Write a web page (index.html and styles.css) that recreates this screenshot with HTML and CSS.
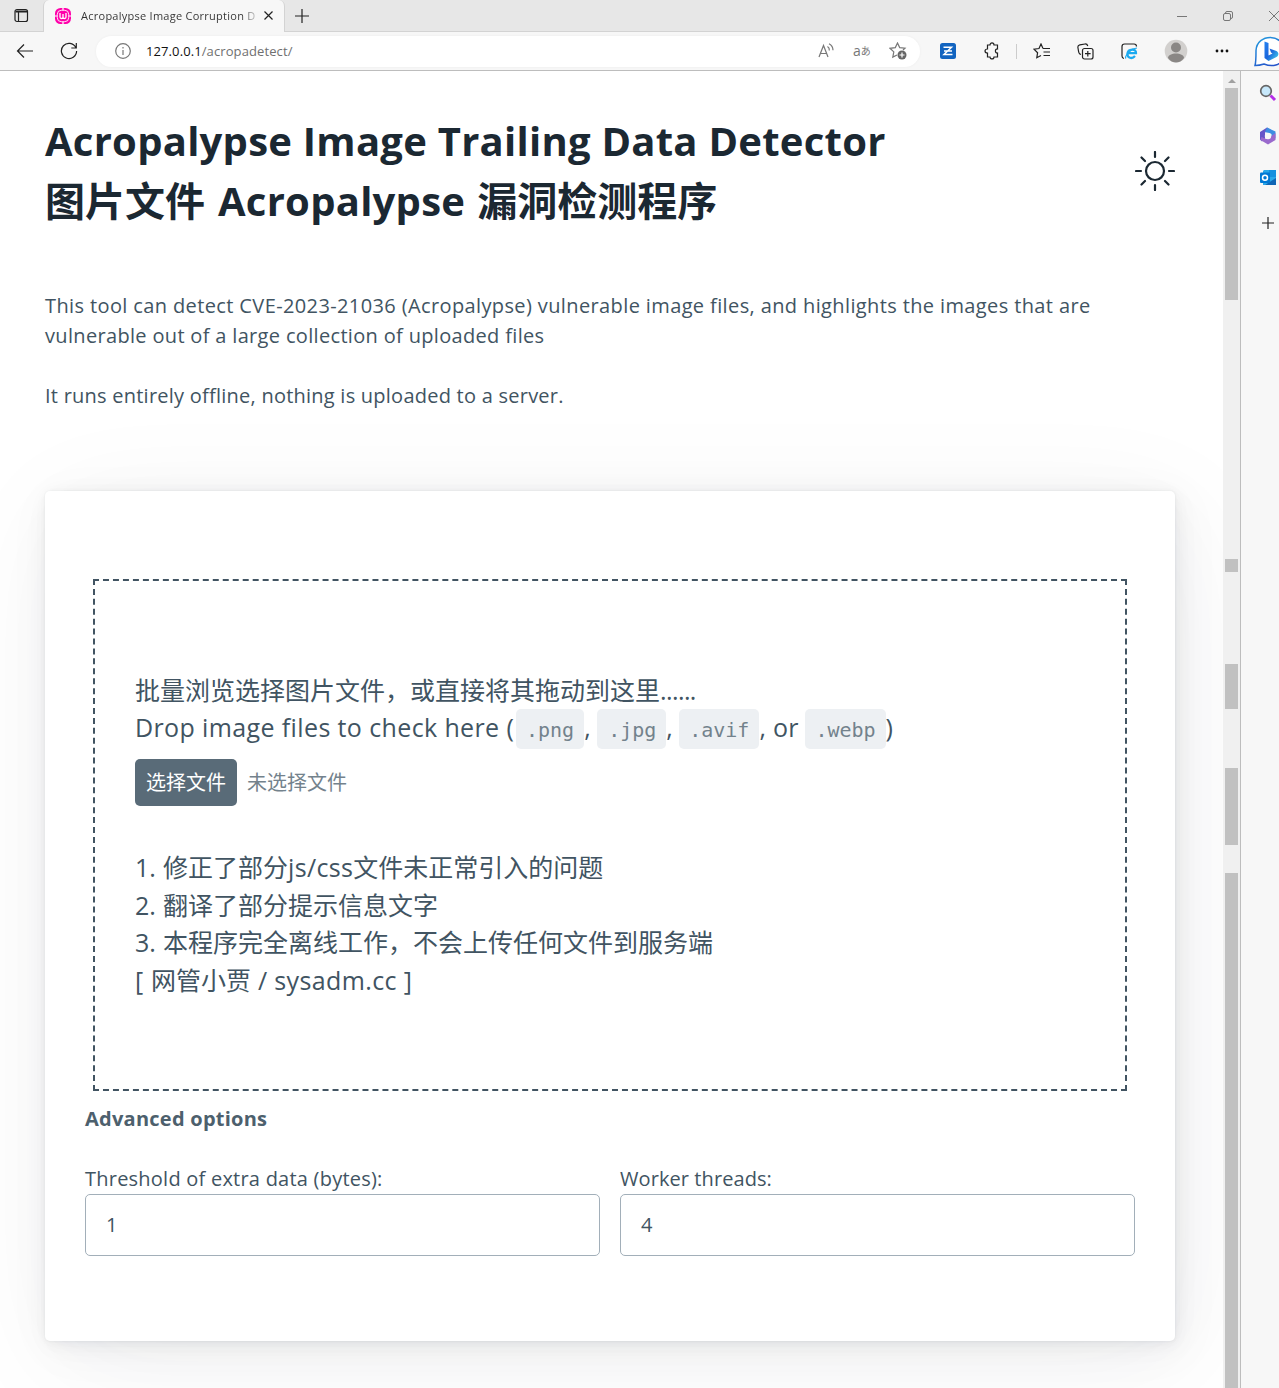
FILE: index.html
```
<!DOCTYPE html>
<html lang="zh-CN">
<head>
<meta charset="utf-8">
<title>Acropalypse Image Corruption Detector</title>
<link rel="stylesheet" href="styles.css">
</head>
<body>
<div class="browser">
  <header class="tabs">
    <div class="tab-menu"><svg width="15" height="15" viewBox="0 0 15 15"><rect x="1" y="1.500" width="12.500" height="12" rx="2"/><path d="M1.500 4h12M4.500 4v9M1.500 3h12"/></svg></div>
    <div class="tab">
      <svg class="favicon" width="16" height="16" viewBox="0 0 16 16"><rect width="16" height="16" rx="5.500" fill="#f0a"/><path d="M8 0v2M8 14v2M0 8h2M14 8h2" stroke="#fff"/><rect x="2.300" y="2.300" width="11.400" height="11.400" rx="4" fill="none" stroke="#fff" stroke-width=".9"/><path d="M5 5v4a1.500 1.500 0 0 0 3 0V6v3a1.500 1.500 0 0 0 3 0V5" fill="none" stroke="#fff" stroke-width="1.300"/></svg>
      <span class="tab-title">Acropalypse Image Corruption D</span>
      <svg width="9" height="9" viewBox="0 0 9 9"><path d="M.5.5l8 8M8.500.5l-8 8"/></svg>
    </div>
    <svg class="new-tab" width="14" height="14" viewBox="0 0 14 14"><path d="M7 0v14M0 7h14"/></svg>
    <div class="window-buttons">
      <svg width="10" height="10" viewBox="0 0 10 10"><path d="M0 5.500h10"/></svg>
      <svg width="10" height="10" viewBox="0 0 10 10"><rect x=".5" y="2.500" width="7" height="7" rx="1.500"/><path d="M2.500 2.500V2A1.500 1.500 0 0 1 4 .5h4A1.500 1.500 0 0 1 9.500 2v4A1.500 1.500 0 0 1 8 7.500h-.5"/></svg>
      <svg width="10" height="10" viewBox="0 0 10 10"><path d="M0 0l10 10M10 0L0 10"/></svg>
    </div>
  </header>
  <nav class="toolbar">
    <svg class="back" width="18" height="16" viewBox="0 0 18 16"><path d="M17 8H1.500M8 1.500L1.500 8 8 14.500"/></svg>
    <svg class="reload" width="18" height="18" viewBox="0 0 18 18"><path d="M15.800 5.500A7.600 7.600 0 1 0 16.600 9M16.300 1v5h-5"/></svg>
    <div class="address">
      <svg width="16" height="16" viewBox="0 0 16 16"><circle cx="8" cy="8" r="7.300"/><path d="M8 7v5M8 4v1.500"/></svg>
      <span class="url"><b>127.0.0.1</b>/acropadetect/</span>
      <div class="address-tools">
        <svg width="17" height="16" viewBox="0 0 17 16"><path d="M1 14L5.500 2.500 10 14M2.500 10.500h6M9.500 3.500a4 4 0 0 1 1.800 4M11 .8a7.500 7.500 0 0 1 4 6.500"/></svg>
        <span class="translate"><i>a</i>あ</span>
        <svg width="18" height="18" viewBox="0 0 18 18"><path d="M14 8l2-1.800-5.300-.6L8.500 1 6.300 5.600 1 6.300l3.800 3.600-1 5.200L8 13"/><circle cx="13" cy="13" r="4.500" fill="#666" stroke="none"/><path d="M10.500 13h5M13 10.500v5" stroke="#fff"/></svg>
      </div>
    </div>
    <div class="extensions">
      <svg width="16" height="16" viewBox="0 0 16 16"><rect width="16" height="16" rx="2.500" fill="#1264c0" stroke="none"/><path d="M3.500 4.300h8L4 11.500h8.500M4 8h8" stroke="#fff" stroke-width="1.500"/></svg>
      <svg width="16" height="18" viewBox="0 0 16 18"><path d="M3.500 3H6c0-2.800 4-2.800 4 0h3.500v4c-2.800-.4-2.800 4.400 0 4v4H10c0 2.600-4 2.600-4 0H3.500v-4c-3.300 0-3.300-4 0-4z"/></svg>
      <span class="divider"></span>
      <svg width="18" height="16" viewBox="0 0 18 16"><path d="M10 5.500L8 1 6 5.500l-5 .7 3.600 3.500-.8 5L8 12.500M10 5.500h7M10.500 9H17M10.500 12.500H17"/></svg>
      <svg width="17" height="17" viewBox="0 0 17 17"><path d="M4 11.500c-1.600-.2-2-1-2.300-2.300L.9 4.500C.7 3 1.400 2.200 2.800 1.900L8 1c1.500-.2 2.300.4 2.800 2"/><rect x="5.500" y="5.500" width="10.500" height="10.500" rx="2"/><path d="M8 10.700h5.600M10.800 8v5.600"/></svg>
      <svg width="17" height="17" viewBox="0 0 17 17"><path d="M3 15.500C1.600 15.300 1 14.500 1 13V3.500Q1 1 3.500 1H13q2.500 0 2.500 2.500"/><path d="M14 13c-3 3.500-8 2-7.500-2.500.5-5 9-5.500 8.500-.3H7.500" stroke="#1baaf0" stroke-width="2.300"/><path d="M5 15.500c-2-2 5-10 11-10.500" stroke="#1baaf0"/></svg>
      <svg class="avatar" width="24" height="24" viewBox="0 0 24 24"><circle cx="12" cy="12" r="11.300" fill="#d2d0ce" stroke="none"/><circle cx="12" cy="8.500" r="5" fill="#8a8785" stroke="none"/><path d="M4 19c0-6 16-6 16 0-4 6-12 6-16 0" fill="#8a8785" stroke="none"/></svg>
      <svg width="14" height="4" viewBox="0 0 14 4"><g fill="#111" stroke="none"><circle cx="2" cy="2" r="1.400"/><circle cx="7" cy="2" r="1.400"/><circle cx="12" cy="2" r="1.400"/></g></svg>
      <svg class="bing" width="30" height="31" viewBox="0 0 30 31"><defs><linearGradient id="bg" x2=".6" y2="1"><stop stop-color="#239ee0"/><stop offset="1" stop-color="#2453ca"/></linearGradient><linearGradient id="bb" x2="1" y2="1"><stop stop-color="#2382f1"/><stop offset=".5" stop-color="#1b66dc"/><stop offset="1" stop-color="#43d9ed"/></linearGradient></defs><path d="M1 29.500c1-3 1-8 1-15C3-3 30-3 30 15S15 30 10 28c-3 1-6 1.500-9 1.500z" fill="#fff" stroke="url(#bg)" stroke-width="1.500"/><path d="M10.500 5.500l4 1.500v12.500l4-2-1.500-1-1.500-4 7 2.500c3 2 2 5 0 6l-8 4-4-3z" fill="url(#bb)" stroke="none"/></svg>
    </div>
  </nav>
  <div class="workspace">
    <main class="page">
      <div class="hero">
        <h1><span class="title-en">Acropalypse Image Trailing Data Detector</span><br>图片文件<span class="title-mixed">Acropalypse</span>漏洞检测程序</h1>
        <svg class="sun" width="40" height="40" viewBox="0 0 40 40"><circle cx="20" cy="20" r="9"/><path d="M20 1v5M20 34v5M1 20h5M34 20h5M6.500 6.500l3.500 3.500M30 30l3.500 3.500M33.500 6.500L30 10M10 30l-3.500 3.500"/></svg>
      </div>
      <p class="intro"><span class="intro-a">This tool can detect CVE-2023-21036 (Acropalypse) vulnerable image files, and highlights the images that are</span><br><span class="intro-b">vulnerable out of a large collection of uploaded files</span><br><br><span class="intro-c">It runs entirely offline, nothing is uploaded to a server.</span></p>
      <article class="card">
        <section class="dropzone">
          <div class="line">批量浏览选择图片文件，或直接将其拖动到这里<span class="dots">......</span></div>
          <div class="line formats"><span class="drop-text">Drop image files to check here (</span><code>.png</code><span class="sep">,</span><code class="jpg">.jpg</code><span class="sep">,</span><code>.avif</code><span class="sep-or">, or</span><code>.webp</code><span>)</span></div>
          <div class="picker"><button type="button">选择文件</button><span>未选择文件</span></div>
          <div class="line"><span class="num">1.</span>修正了部分<span class="jscss">js/css</span>文件未正常引入的问题</div>
          <div class="line"><span class="num">2.</span>翻译了部分提示信息文字</div>
          <div class="line"><span class="num">3.</span>本程序完全离线工作，不会上传任何文件到服务端</div>
          <div class="line"><span class="open">[</span>网管小贾<span class="site"> / sysadm.cc ]</span></div>
        </section>
        <h2><span>Advanced options</span></h2>
        <div class="fields">
          <label><span class="label-a">Threshold of extra data (bytes):</span><input value="1"></label>
          <label><span class="label-b">Worker threads:</span><input value="4"></label>
        </div>
      </article>
    </main>
    <div class="scrollbar"><span class="arrow"></span><i class="t1"></i><i class="t2"></i><i class="t3"></i><i class="t4"></i><i class="t5"></i></div>
    <aside class="sidebar">
      <svg width="18" height="18" viewBox="0 0 18 18"><path d="M11.500 11.500l4.500 4.500" stroke="#b42ee8" stroke-width="3"/><circle cx="7" cy="7" r="5.300" fill="#c7e8fb" stroke="#656565" stroke-width="1.700"/></svg>
      <svg width="18" height="18" viewBox="0 0 18 18"><path d="M1 5l7-4.500 3 2-5 3v6l-3 3-2-2z" fill="#6655c8"/><path d="M8 .5l8.500 4v7l-4-2V7L6 5z" fill="#3d8ee2"/><path d="M16.500 6v7L9 17.500 1.500 13l1-3 5 2 5-3z" fill="#9a6acd"/><circle cx="9" cy="9" r="3.200" fill="#f7f7f7"/></svg>
      <svg width="18" height="18" viewBox="0 0 18 18"><path d="M5 1h12v15H4V2z" fill="#28a8ea"/><path d="M10 1h7v7h-7z" fill="#1490df"/><path d="M6 16l11-7v7z" fill="#1066b5"/><rect x="1" y="3.500" width="10" height="10.500" rx="1" fill="#0078d4"/><circle cx="6" cy="8.800" r="2.500" stroke="#fff" stroke-width="1.500" fill="none"/></svg>
      <svg class="add" width="12" height="12" viewBox="0 0 12 12"><path d="M6 0v12M0 6h12" stroke="#222"/></svg>
    </aside>
  </div>
</div>
</body>
</html>
```
FILE: styles.css
```
* { box-sizing: border-box; }
body { margin: 0; overflow: hidden; background: #f7f7f7; font-family: "Open Sans", "Noto Sans CJK SC", sans-serif; }
svg { display: block; flex: none; fill: none; stroke: #222; stroke-width: 1.2; }
.browser { width: 1279px; height: 1388px; display: flex; flex-direction: column; overflow: hidden; }
.tabs { height: 32px; flex: none; display: flex; align-items: center; background: #e7e7e7; border-bottom: 1px solid #d3d3d3; }
.tab-menu { width: 43px; padding-left: 14px; }
.tab { width: 242px; height: 32px; flex: none; display: flex; align-items: center; padding: 0 12px; background: #f7f7f7; border: 1px solid #d3d3d3; border-width: 0 1px; border-radius: 6px 6px 0 0; }
.favicon { margin-right: 10px; stroke: none; margin-left: -1px; }
.tab-title { width: 175px; margin-right: 8px; white-space: nowrap; letter-spacing: .26px; font-size: 11px; background: linear-gradient(90deg, #333 92%, #ccc); background-clip: text; -webkit-text-fill-color: transparent; }
.new-tab { margin-left: 10px; }
.window-buttons { margin-left: auto; display: flex; gap: 36px; }
.window-buttons svg { stroke: #777; stroke-width: 1; }
.toolbar { height: 39px; flex: none; display: flex; align-items: center; border-bottom: 1px solid #bdbdbd; background: #f7f7f7; }
.back { margin-left: 16px; }
.reload { margin-left: 26px; }
.address { width: 824px; flex: none; height: 31px; margin-left: 18px; padding: 0 13px 0 19px; border-radius: 16px; background: #fff; display: flex; align-items: center; box-shadow: 0 0 3px #0000000c; }
.address > svg { stroke: #777; }
.url { margin-left: 15px; font-size: 13px; letter-spacing: .1px; color: #707070; }
.url b { font-weight: 400; color: #111; }
.address-tools { margin-left: auto; display: flex; align-items: center; gap: 18px; color: #777; }
.address-tools svg { stroke: #777; }
.translate { width: 18px; display: flex; align-items: center; font-size: 10px; line-height: 16px; }
.translate i { font: 14px "Open Sans", sans-serif; line-height: 14px; }
.extensions { flex: none; display: flex; align-items: center; margin-left: 20px; }
.extensions svg:nth-of-type(2) { margin-left: 28px; }
.divider { width: 1px; height: 15px; margin: 0 16px; background: #ccc; }
.extensions svg:nth-of-type(4) { margin-left: 26px; }
.extensions svg:nth-of-type(5) { margin-left: 27px; }
.extensions .avatar { margin-left: 26px; }
.avatar + svg { margin-left: 27px; }
.bing { margin-left: 25px; }
.workspace { flex: 1; min-height: 0; display: flex; }
.page { width: 1223px; flex: none; overflow: hidden; padding: 40px 48px 0 45px; background: #fff; color: #415462; font-size: 20px; line-height: 30px; }
.hero { height: 120px; display: flex; align-items: center; justify-content: space-between; }
h1 { margin: 0; font-size: 40px; line-height: 60px; color: #1b2832; white-space: nowrap; }
.title-en { letter-spacing: .26px; }
.title-mixed { margin: 0 12px 0 13px; letter-spacing: .26px; }
.sun { stroke: #1b2832; stroke-width: 2.2; stroke-linecap: round; }
.intro { height: 120px; margin: 60px 0 80px; white-space: nowrap; }
.intro-a { letter-spacing: .38px; }
.intro-b { letter-spacing: .33px; }
.intro-c { letter-spacing: .24px; }
.card { width: 1130px; height: 850px; padding: 88px 40px 0; border-radius: 5px; background: #fff; box-shadow: .29px .58px 3.48px rgba(27,40,50,.017), .67px 1.34px 8.04px rgba(27,40,50,.024), 1.25px 2.5px 15px rgba(27,40,50,.03), 2.25px 4.5px 27px rgba(27,40,50,.036), 4.17px 8.34px 50px rgba(27,40,50,.043), 10px 20px 120px rgba(27,40,50,.06), 0 0 0 1.25px rgba(27,40,50,.015); }
.dropzone { height: 512px; margin: 0 8px; padding: 91px 40px; border: 2px dashed #415462; font-size: 25px; }
.line { height: 37.5px; line-height: 37.5px; white-space: nowrap; }
.dots { letter-spacing: -.6px; }
.formats { display: flex; align-items: center; }
.formats span { padding-bottom: 2px; }
code { height: 40px; margin-top: 1px; padding: 0 10px; border-radius: 5px; background: #edf0f3; color: #73828c; font: 20px/42px "DejaVu Sans Mono", monospace; }
.jpg { width: 69px; padding-left: 11px; }
.drop-text { width: 381px; letter-spacing: .38px; }
.sep { width: 13px; }
.sep-or { width: 46px; letter-spacing: .3px; }
.picker { height: 47px; margin: 12px 0 43px; display: flex; align-items: center; gap: 10px; font-size: 20px; color: #73828c; }
.picker span { padding-top: 1px; }
.picker button { width: 102px; height: 47px; padding: 1px 0 0; border: 0; border-radius: 5px; background: #596b78; color: #fff; font: inherit; }
.num { display: inline-block; width: 28px; }
.jscss { letter-spacing: .35px; }
.open { display: inline-block; width: 16px; }
.site { letter-spacing: .38px; }
h2 { margin: 13px 0 30px; font-size: 20px; line-height: 30px; letter-spacing: .25px; color: #4d606d; }
.fields { display: grid; grid-template-columns: 1fr 1fr; gap: 20px; }
.fields label { display: block; white-space: nowrap; }
.label-a { letter-spacing: .23px; }
.label-b { letter-spacing: .08px; }
.fields input { display: block; width: 100%; height: 62px; padding: 0 20px 2px; border: 1px solid #a2afb9; border-radius: 5px; color: #415462; font: 20px "Open Sans", sans-serif; outline: 0; }
.scrollbar { width: 18px; flex: none; position: relative; background: #f0f0f0; border-right: 1px solid #bdbdbd; }
.scrollbar i { position: absolute; left: 2px; width: 13px; background: #c1c1c1; }
.arrow { position: absolute; left: 5px; top: 8px; border: 4px solid transparent; border-top: 0; border-bottom: 4px solid #a0a0a0; }
.t1 { top: 17px; height: 212px; }
.t2 { top: 488px; height: 13px; }
.t3 { top: 593px; height: 45px; }
.t4 { top: 697px; height: 77px; }
.t5 { top: 802px; height: 515px; }
.sidebar { flex: 1; display: flex; flex-direction: column; padding: 13px 0 0 18px; gap: 24.5px; background: #f7f7f7; }
.sidebar svg { stroke: none; }
.add { margin: 5px 0 0 3px; }
```
